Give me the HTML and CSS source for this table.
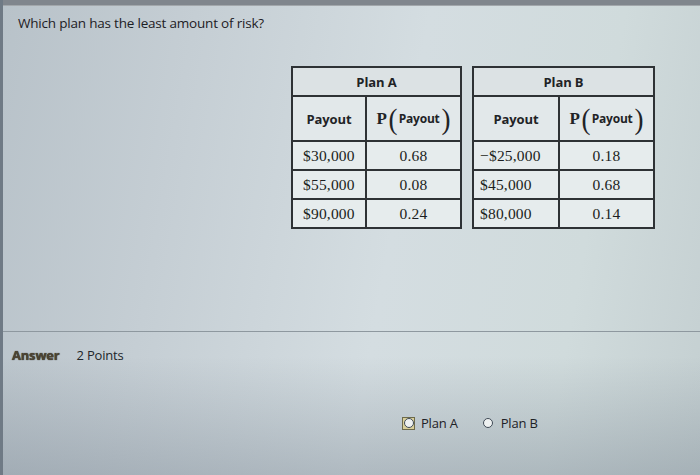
FILE: index.html
```html
<!DOCTYPE html>
<html>
<head>
<meta charset="utf-8">
<link rel="stylesheet" href="styles.css">
</head>
<body>
<div class="screen">
  <div class="topbar"></div>
  <p class="question">Which plan has the least amount of risk?</p>
  <div class="tables">
    <table class="plan plan-a">
      <colgroup><col class="c1"><col class="c2"></colgroup>
      <tr class="head"><th colspan="2">Plan A</th></tr>
      <tr class="sub"><th>Payout</th><th><span class="pp"><span class="pl">P</span><span class="par">(</span><span class="pin">Payout</span><span class="par">)</span></span></th></tr>
      <tr class="data"><td class="pay">$30,000</td><td>0.68</td></tr>
      <tr class="data"><td class="pay">$55,000</td><td>0.08</td></tr>
      <tr class="data"><td class="pay">$90,000</td><td>0.24</td></tr>
    </table>
    <table class="plan plan-b">
      <colgroup><col class="c1"><col class="c2"></colgroup>
      <tr class="head"><th colspan="2">Plan B</th></tr>
      <tr class="sub"><th>Payout</th><th><span class="pp"><span class="pl">P</span><span class="par">(</span><span class="pin">Payout</span><span class="par">)</span></span></th></tr>
      <tr class="data"><td class="pay">&minus;$25,000</td><td>0.18</td></tr>
      <tr class="data"><td class="pay">$45,000</td><td>0.68</td></tr>
      <tr class="data"><td class="pay">$80,000</td><td>0.14</td></tr>
    </table>
  </div>
  <div class="divider"></div>
  <div class="answer"><span class="ans">Answer</span><span class="pts">2 Points</span></div>
  <div class="options">
    <label class="opt"><span class="radio focused"><span class="ring"></span></span>Plan A</label>
    <label class="opt"><span class="radio"><span class="ring"></span></span>Plan B</label>
  </div>
</div>
</body>
</html>
```
FILE: styles.css
```css
html, body {
  margin: 0;
  padding: 0;
}
body {
  width: 700px;
  height: 475px;
  overflow: hidden;
  font-family: "Open Sans", "DejaVu Sans", sans-serif;
  color: #1d2024;
}
.screen {
  width: 700px;
  height: 475px;
  box-sizing: border-box;
  border-left: 3px solid #6f7a85;
  background:
    linear-gradient(180deg, rgba(140,150,160,0) 0%, rgba(140,150,160,0) 75%, rgba(120,132,144,0.4) 100%),
    linear-gradient(100deg, #b8c2c9 0%, #c5ced4 25%, #d4dde1 55%, #d0dbdc 80%, #c4cfd1 100%);
  display: flex;
  flex-direction: column;
}
.topbar {
  height: 5px;
  background: #80868d;
  border-bottom: 1px solid #a2a7ab;
  flex: none;
}
.question {
  margin: 8px 0 0 15px;
  font-size: 13.5px;
  line-height: 18px;
  letter-spacing: -0.2px;
}
.tables {
  display: flex;
  gap: 10px;
  margin: 34px 0 0 288px;
}
.plan {
  border-collapse: collapse;
  border: 2px solid #2e3235;
  background: #e6eced;
  table-layout: fixed;
}
.plan-a { width: 171px; }
.plan-a .c1 { width: 74px; }
.plan-b { width: 183px; }
.plan-b .c1 { width: 86px; }
.plan th, .plan td {
  border: 2px solid #2e3235;
  padding: 0;
  text-align: center;
}
.head th {
  height: 27px;
  font-size: 13px;
  font-weight: 700;
  background: #dce2e4;
  color: #1f2326;
  letter-spacing: -0.1px;
}
.sub th {
  height: 43px;
  font-size: 13px;
  font-weight: 700;
  background: #e2e8ea;
  color: #1f2326;
  letter-spacing: -0.1px;
}
.pp {
  display: inline-flex;
  align-items: center;
}
.pl {
  font-family: "Liberation Serif", serif;
  font-size: 17px;
  font-weight: 700;
  margin-right: 1px;
}
.par {
  font-family: "Liberation Serif", serif;
  font-size: 30px;
  font-weight: 400;
  line-height: 30px;
  transform: scaleX(0.9);
}
.pin {
  font-size: 12px;
  padding: 0 1px;
  letter-spacing: -0.2px;
}
.data td {
  height: 27px;
  font-family: "Liberation Serif", serif;
  font-size: 15.5px;
  color: #1b1e21;
  letter-spacing: 0.2px;
}
.data td.pay {
  text-align: left;
  padding-left: 10px;
}
.plan-b .data td.pay {
  padding-left: 6px;
}
.divider {
  height: 1px;
  background: #8e989f;
  margin: 102px 0 0 0;
}
.answer {
  margin: 14px 0 0 9px;
  display: flex;
  gap: 17px;
  font-size: 13px;
  line-height: 18px;
  letter-spacing: -0.2px;
}
.ans {
  font-weight: 700;
  color: #4d4433;
  text-shadow: 0 0 1px #1a1a14;
}
.pts {
  color: #22262a;
}
.options {
  display: flex;
  gap: 24px;
  margin: 51px 0 0 399px;
  font-size: 13px;
  line-height: 16px;
  letter-spacing: -0.2px;
}
.opt {
  display: flex;
  align-items: center;
  gap: 6px;
  color: #1d2126;
}
.radio {
  width: 13px;
  height: 13px;
  display: flex;
  align-items: center;
  justify-content: center;
  box-sizing: border-box;
}
.radio.focused {
  background: #d9cf9a;
  border: 1px solid #6d6a4a;
}
.ring {
  width: 10px;
  height: 10px;
  border: 1.5px solid #3f4a55;
  border-radius: 50%;
  box-sizing: border-box;
  background: #eef1f1;
}
```
